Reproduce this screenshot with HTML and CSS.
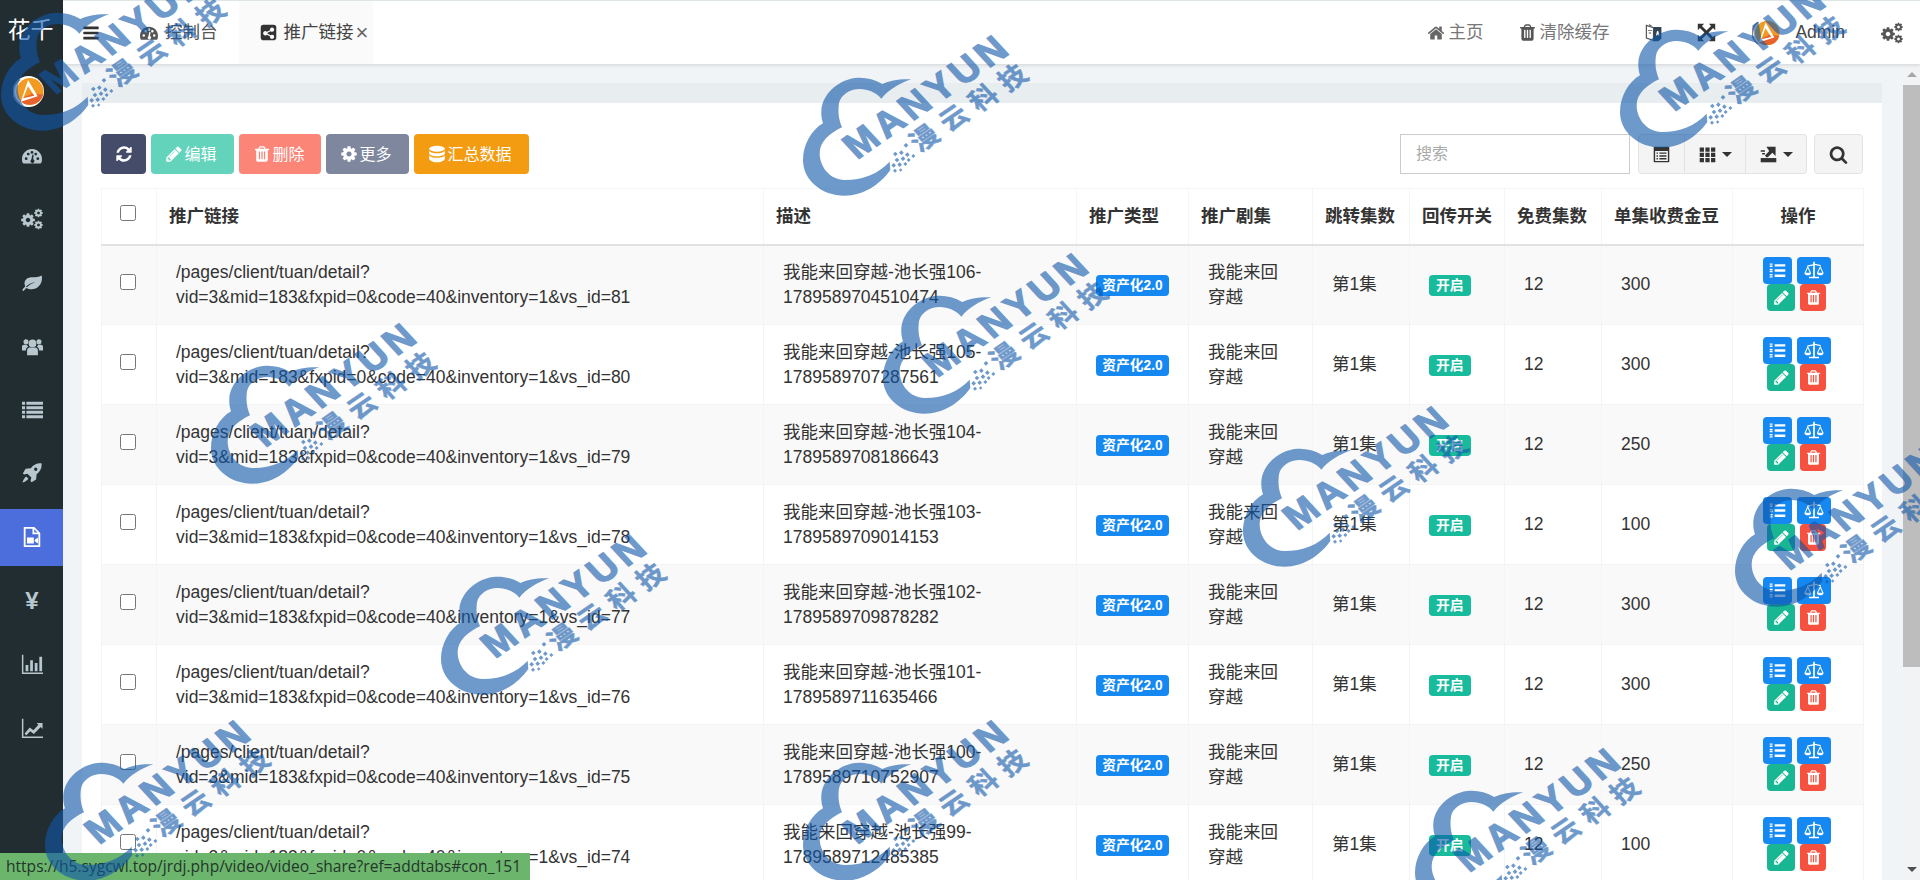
FILE: index.html
```html
<!DOCTYPE html>
<html lang="zh-CN">
<head>
<meta charset="utf-8">
<title>推广链接</title>
<link rel="stylesheet" href="styles.css">
</head>
<body>
<svg class="defs" aria-hidden="true">
  <symbol id="i-bars" viewBox="0 0 1792 1792"><path d="M1664 1344v128q0 26-19 45t-45 19h-1408q-26 0-45-19t-19-45v-128q0-26 19-45t45-19h1408q26 0 45 19t19 45zm0-512v128q0 26-19 45t-45 19h-1408q-26 0-45-19t-19-45v-128q0-26 19-45t45-19h1408q26 0 45 19t19 45zm0-512v128q0 26-19 45t-45 19h-1408q-26 0-45-19t-19-45v-128q0-26 19-45t45-19h1408q26 0 45 19t19 45z"/></symbol>
  <symbol id="i-search" viewBox="0 0 1792 1792"><path d="M1216 832q0-185-131.500-316.500t-316.500-131.500-316.500 131.500-131.500 316.500 131.500 316.500 316.500 131.500 316.500-131.500 131.500-316.500zm512 832q0 52-38 90t-90 38q-54 0-90-38l-343-342q-179 124-399 124-143 0-273.500-55.500t-225-150-150-225-55.500-273.500 55.500-273.500 150-225 225-150 273.500-55.500 273.500 55.500 225 150 150 225 55.500 273.500q0 220-124 399l343 343q37 37 37 90z"/></symbol>
  <symbol id="i-trash" viewBox="0 0 1792 1792"><path d="M704 1376v-704q0-14-9-23t-23-9h-64q-14 0-23 9t-9 23v704q0 14 9 23t23 9h64q14 0 23-9t9-23zm256 0v-704q0-14-9-23t-23-9h-64q-14 0-23 9t-9 23v704q0 14 9 23t23 9h64q14 0 23-9t9-23zm256 0v-704q0-14-9-23t-23-9h-64q-14 0-23 9t-9 23v704q0 14 9 23t23 9h64q14 0 23-9t9-23zm-544-992h448l-48-117q-7-9-17-11h-317q-10 2-17 11zm928 32v64q0 14-9 23t-23 9h-96v948q0 83-47 143.500t-113 60.500h-832q-66 0-113-58.500t-47-141.500v-952h-96q-14 0-23-9t-9-23v-64q0-14 9-23t23-9h309l70-167q15-37 54-63t79-26h320q40 0 79 26t54 63l70 167h309q14 0 23 9t9 23z"/></symbol>
  <symbol id="i-pencil" viewBox="0 0 1792 1792"><path d="M491 1536l91-91-235-235-91 91v107h128v128h107zm523-928q0-22-22-22-10 0-17 7l-542 542q-7 7-7 17 0 22 22 22 10 0 17-7l542-542q7-7 7-17zm-54-192l416 416-832 832h-416v-416zm683 96q0 53-37 90l-166 166-416-416 166-165q36-38 90-38 53 0 91 38l235 234q37 39 37 91z"/></symbol>
  <symbol id="i-home" viewBox="0 0 1792 1792"><path d="M1472 992v480q0 26-19 45t-45 19h-384v-384h-256v384h-384q-26 0-45-19t-19-45v-480q0-1 .5-3t.5-3l575-474 575 474q1 2 1 6zm223-69l-62 74q-8 9-21 11h-3q-13 0-21-7l-692-577-692 577q-12 8-24 7-13-2-21-11l-62-74q-8-10-7-23.500t11-21.500l719-599q32-26 76-26t76 26l244 204v-195q0-14 9-23t23-9h192q14 0 23 9t9 23v408l219 182q10 8 11 21.500t-7 23.500z"/></symbol>
  <symbol id="i-refresh" viewBox="0 0 1792 1792"><path d="M1639 1056q0 5-1 7-64 268-268 434.500t-478 166.500q-146 0-282.500-55t-243.500-157l-129 129q-19 19-45 19t-45-19-19-45v-448q0-26 19-45t45-19h448q26 0 45 19t19 45-19 45l-137 137q71 66 161 102t187 36q134 0 250-65t186-179q11-17 53-117 8-23 30-23h192q13 0 22.500 9.500t9.500 22.500zm25-800v448q0 26-19 45t-45 19h-448q-26 0-45-19t-19-45 19-45l138-138q-148-137-349-137-134 0-250 65t-186 179q-11 17-53 117-8 23-30 23h-199q-13 0-22.500-9.500t-9.500-22.500v-7q65-268 270-434.500t480-166.500q146 0 284 55.500t245 156.500l130-129q19-19 45-19t45 19 19 45z"/></symbol>
  <symbol id="i-cog" viewBox="0 0 1792 1792"><path d="M1152 896q0-106-75-181t-181-75-181 75-75 181 75 181 181 75 181-75 75-181zm512-109v222q0 12-8 23t-20 13l-185 28q-19 54-39 91 35 50 107 138 10 12 10 25t-9 23q-27 37-99 108t-94 71q-12 0-26-9l-138-108q-44 23-91 38-16 136-29 186-7 28-36 28h-222q-14 0-24.500-8.500t-11.500-21.500l-28-184q-49-16-90-37l-141 107q-10 9-25 9-14 0-25-11-126-114-165-168-7-10-7-23 0-12 8-23 15-21 51-66.500t54-70.500q-27-50-41-99l-183-27q-13-2-21-12.500t-8-23.500v-222q0-12 8-23t19-13l186-28q14-46 39-92-40-57-107-138-10-12-10-24 0-10 9-23 26-36 98.500-107.500t94.500-71.500q13 0 26 10l138 107q44-23 91-38 16-136 29-186 7-28 36-28h222q14 0 24.500 8.500t11.500 21.500l28 184q49 16 90 37l142-107q9-9 24-9 13 0 25 10 129 119 165 170 7 8 7 22 0 12-8 23-15 21-51 66.500t-54 70.500q26 50 41 98l183 28q13 2 21 12.500t8 23.500z"/></symbol>
  <symbol id="i-cogs" viewBox="0 0 24 24"><use href="#i-cog" x="0" y="5" width="16" height="16"/><use href="#i-cog" x="13.500" y="1" width="10" height="10"/><use href="#i-cog" x="13.500" y="13" width="10" height="10"/></symbol>
  <symbol id="i-dash" viewBox="0 0 24 24"><path fill-rule="evenodd" d="M1 20.500C.4 19.300 0 17.300 0 15.500 0 8.800 5.400 3.500 12 3.500S24 8.800 24 15.500c0 1.800-.4 3.800-1 5-.2.400-.6.500-1 .5H2c-.4 0-.8-.1-1-.5zM5 13.500a1.700 1.700 0 1 0 0 3.400 1.700 1.700 0 0 0 0-3.400zM7.500 8a1.700 1.700 0 1 0 0 3.400 1.700 1.700 0 0 0 0-3.400zM12 6a1.700 1.700 0 1 0 0 3.400 1.700 1.700 0 0 0 0-3.400zM16.500 8a1.700 1.700 0 1 0 0 3.400 1.700 1.700 0 0 0 0-3.400zM19 13.500a1.700 1.700 0 1 0 0 3.400 1.700 1.700 0 0 0 0-3.400zM11.200 16.200a2.300 2.300 0 1 0 2.200-.2l.6-5.500h-1.600z"/></symbol>
  <symbol id="i-leaf" viewBox="0 0 24 24"><path fill-rule="evenodd" d="M23.500 3c.5 1 .5 2 .5 3 0 8-5.500 13.500-12.500 13.500-2.500 0-4.700-.5-6.300-1.500-1 .9-2 2-3 3.200-.5.500-1.700.3-1.700-.7 0-.9 2.400-3.300 3.300-4.200C3.600 15 3 13.800 3 12.300 3 7.500 7.500 5 12 5c4 0 8.500 0 11.500-2zM5.800 17.200c2.700-3 5.900-5 10.200-6.200-4.800.4-8.300 2.300-11.300 5.400.3.300.7.600 1.100.8z"/></symbol>
  <symbol id="i-users" viewBox="0 0 24 24"><circle cx="12" cy="8.500" r="4.400"/><circle cx="4.600" cy="6.500" r="2.900"/><circle cx="19.400" cy="6.500" r="2.900"/><path d="M5.800 22v-5.500c0-2.300 1.700-3.500 3-3.500h6.400c1.300 0 3 1.200 3 3.500V22zM0 16.500v-4C0 11 1 10 2.300 10h3.300c.3 1 .9 1.800 1.600 2.400-1.700.6-2.800 2.200-2.800 4.100zM24 16.500v-4c0-1.500-1-2.500-2.300-2.500h-3.300c-.3 1-.9 1.800-1.600 2.400 1.700.6 2.800 2.200 2.800 4.100z"/></symbol>
  <symbol id="i-list" viewBox="0 0 24 24"><path d="M0 3h3.500v3.500H0zM5 3h19v3.500H5zM0 8.200h3.500v3.500H0zM5 8.200h19v3.500H5zM0 13.400h3.500v3.500H0zM5 13.400h19v3.500H5zM0 18.600h3.500v3.500H0zM5 18.600h19v3.500H5z"/></symbol>
  <symbol id="i-rocket" viewBox="0 0 24 24"><path fill-rule="evenodd" d="M23.500 .5c.5 5-1.500 9.500-6 13l-.6 6.200L11.500 23l-1.300-1.500 1-4-4.700-4.700-4 1L1 12.500 4.300 7l6.200-.6c3.500-4.500 8-6.500 13-5.900zM16.500 5.500a2 2 0 1 0 0 4 2 2 0 0 0 0-4z"/><path d="M5.200 16.300l2.500 2.500c-1.500 2.300-4 3.500-7.200 4.700 1.200-3.200 2.400-5.700 4.700-7.200z"/></symbol>
  <symbol id="i-file" viewBox="0 0 24 24"><path fill-rule="evenodd" d="M3 1h11.500L21 7.500V23H3zM5 3v18h14V9h-6.500V3zM14.500 3.500V7h3.500zM6.500 12.500h7.500v6.500H6.500zM15 15l3.500-2.500v6.500L15 16.500z"/></symbol>
  <symbol id="i-barchart" viewBox="0 0 24 24"><path d="M1 2h1.600v19.400H24V23H1zM5 13h3v7H5zM10 8h3v12h-3zM15 11h3v9h-3zM20 4h3v16h-3z"/></symbol>
  <symbol id="i-linechart" viewBox="0 0 24 24"><path d="M1 2h1.600v19.400H24V23H1z"/><path d="M4 18l5.500-6.500 4 3L19 8.500 17 6.500h6.500v6.500l-2-2-7.500 7.500-4-3-4.300 4.800z"/></symbol>
  <symbol id="i-arrows" viewBox="0 0 24 24"><path d="M1 1h8L6.300 3.700 12 9.400l5.700-5.700L15 1h8v8l-2.700-2.700L14.600 12l5.700 5.700L23 15v8h-8l2.700-2.700L12 14.600l-5.700 5.700L9 23H1v-8l2.700 2.700L9.400 12 3.700 6.300 1 9z"/></symbol>
  <symbol id="i-lang" viewBox="0 0 24 24"><path fill="#fff" stroke="#555" stroke-width="1.500" d="M3 3l9 3v16l-9-3z"/><path fill="#345" d="M12 5h10v15l-4 3h-6z"/><path fill="#fff" d="M15 16l1.500-6h1.500l1.500 6h-1.200l-.3-1.300h-1.600l-.3 1.300z"/><path fill="#667" d="M6 1l5 3H7z"/><path fill="#555" d="M5 9h5v1.200H5zM6 12h3v1.200H6z"/></symbol>
  <symbol id="i-share" viewBox="0 0 24 24"><path fill-rule="evenodd" d="M5 1h14a4 4 0 0 1 4 4v14a4 4 0 0 1-4 4H5a4 4 0 0 1-4-4V5a4 4 0 0 1 4-4zM17 5a3 3 0 0 0-3 3l.1.700-4.500 2.300a3 3 0 1 0 0 4l4.500 2.300-.1.700a3 3 0 1 0 1-2.200l-4.500-2.300a3 3 0 0 0 0-1l4.500-2.300A3 3 0 1 0 17 5z"/></symbol>
  <symbol id="i-listalt" viewBox="0 0 24 24"><path fill-rule="evenodd" d="M2 1h20a1 1 0 0 1 1 1v20a1 1 0 0 1-1 1H2a1 1 0 0 1-1-1V2a1 1 0 0 1 1-1zM3 7v14h18V7zM5 9h2v2H5zM9 9h10v2H9zM5 13h2v2H5zM9 13h10v2H9zM5 17h2v2H5zM9 17h10v2H9z"/></symbol>
  <symbol id="i-th" viewBox="0 0 24 24"><path d="M1 2h6v6H1zM9 2h6v6H9zM17 2h6v6h-6zM1 9.500h6v6H1zM9 9.500h6v6H9zM17 9.500h6v6h-6zM1 17h6v6H1zM9 17h6v6H9zM17 17h6v6h-6z"/></symbol>
  <symbol id="i-export" viewBox="0 0 24 24"><path d="M1 17h22v6H1z"/><path d="M9 1h13v13l-4.500-4.500L11 16H9l-2-2.500 6-6.500z"/><path d="M1 6h6v2H1zM3 10h4v2H3z"/></symbol>
  <symbol id="i-db" viewBox="0 0 24 24"><ellipse cx="12" cy="5" rx="10.500" ry="4"/><path d="M1.500 7.500C3 10 8 11 12 11s9-1 10.500-3.500v4C21 14 16 15 12 15s-9-1-10.500-3.500zM1.500 13.500C3 16 8 17 12 17s9-1 10.500-3.500v5C21 21.500 16 23 12 23s-9-1.500-10.500-4.500z"/></symbol>
  <symbol id="i-listol" viewBox="0 0 24 24"><path d="M8 3h15v3.500H8zM8 10.200h15v3.500H8zM8 17.500h15V21H8zM1 2h4v2H1zM1 5h4v2H1zM1 9.500h4v2H1zM1 12.500h4v2H1zM1 17h4v2H1zM1 20h4v2H1z"/></symbol>
  <symbol id="i-scale" viewBox="0 0 24 24"><path d="M11 2h2v2.500l7 1.500v1.500l-7-1.500V20h5v2H6v-2h5V6.500L4 8V6.500l7-1.500z"/><path fill-rule="evenodd" d="M4.500 7l4 8.500c0 1.800-2 2.800-4 2.800s-4-1-4-2.800zM4.500 10l-2.500 5.300h5zM19.500 7l4 8.500c0 1.800-2 2.800-4 2.800s-4-1-4-2.800zM19.500 10L17 15.300h5z"/></symbol>
  <symbol id="i-avatar" viewBox="0 0 32 32"><circle cx="16" cy="16" r="16" fill="#fff"/><path fill="#7c8794" d="M6 3a16 16 0 0 0 0 26l2-1a14 14 0 0 1 0-24z"/><circle cx="17.500" cy="16" r="14" fill="#f39a22"/><path fill="#e7622c" d="M31 19a14 14 0 0 1-24 6l11-7z"/><path fill="#fff" fill-rule="evenodd" d="M15.500 4l10 17L8 26.500zM15.500 10.500l-5 12.500 11.500-2.500z"/><path fill="#f39a22" d="M15.500 14l-2.500 6.500 5.500-1z"/></symbol>
</svg>

<div class="app">
  <aside class="sidebar">
    <div class="brand">花千</div>
    <div class="user-panel"><svg class="user-img"><use href="#i-avatar"/></svg></div>
    <ul class="menu">
      <li class="menu-item"><svg class="menu-icon"><use href="#i-dash"/></svg></li>
      <li class="menu-item"><svg class="menu-icon ic-cogs"><use href="#i-cogs"/></svg></li>
      <li class="menu-item"><svg class="menu-icon"><use href="#i-leaf"/></svg></li>
      <li class="menu-item"><svg class="menu-icon ic-wide"><use href="#i-users"/></svg></li>
      <li class="menu-item"><svg class="menu-icon ic-wide"><use href="#i-list"/></svg></li>
      <li class="menu-item"><svg class="menu-icon"><use href="#i-rocket"/></svg></li>
      <li class="menu-item active"><svg class="menu-icon ic-file"><use href="#i-file"/></svg></li>
      <li class="menu-item yen">¥</li>
      <li class="menu-item"><svg class="menu-icon ic-chart"><use href="#i-barchart"/></svg></li>
      <li class="menu-item"><svg class="menu-icon ic-chart"><use href="#i-linechart"/></svg></li>
    </ul>
  </aside>

  <div class="main">
    <header class="topbar">
      <svg class="toggle"><use href="#i-bars"/></svg>
      <div class="tab tab-home"><svg class="tab-dash"><use href="#i-dash"/></svg>控制台</div>
      <div class="tab tab-active"><svg class="tab-share"><use href="#i-share"/></svg>推广链接<span class="tab-close">×</span></div>
      <nav class="topnav">
        <a class="nav-link"><svg class="nav-home"><use href="#i-home"/></svg>主页</a>
        <a class="nav-link"><svg class="nav-trash"><use href="#i-trash"/></svg>清除缓存</a>
        <a class="nav-link"><svg class="nav-lang"><use href="#i-lang"/></svg></a>
        <a class="nav-link"><svg class="nav-arrows"><use href="#i-arrows"/></svg></a>
        <a class="nav-user"><svg class="nav-avatar"><use href="#i-avatar"/></svg>Admin</a>
        <a class="nav-link"><svg class="nav-cogs"><use href="#i-cogs"/></svg></a>
      </nav>
    </header>

    <div class="workspace">
      <div class="content">
        <section class="panel">
          <div class="panel-heading"></div>
          <div class="panel-body">
            <div class="toolbar">
              <div class="actions">
                <button class="btn btn-navy"><svg class="btn-icon"><use href="#i-refresh"/></svg></button>
                <button class="btn btn-green"><svg class="btn-icon"><use href="#i-pencil"/></svg>编辑</button>
                <button class="btn btn-red"><svg class="btn-icon"><use href="#i-trash"/></svg>删除</button>
                <button class="btn btn-grey"><svg class="btn-icon"><use href="#i-cog"/></svg>更多</button>
                <button class="btn btn-orange"><svg class="btn-icon"><use href="#i-db"/></svg>汇总数据</button>
              </div>
              <div class="tools">
                <input class="search" placeholder="搜索">
                <div class="btn-group">
                  <button class="tool tool-a"><svg class="tool-icon"><use href="#i-listalt"/></svg></button>
                  <button class="tool tool-b"><svg class="tool-icon"><use href="#i-th"/></svg><i class="caret"></i></button>
                  <button class="tool tool-b"><svg class="tool-icon"><use href="#i-export"/></svg><i class="caret"></i></button>
                </div>
                <button class="tool tool-search"><svg class="tool-icon ic-search"><use href="#i-search"/></svg></button>
              </div>
            </div>

            <table class="grid">
              <colgroup>
                <col class="c-check"><col class="c-link"><col class="c-desc"><col class="c-type"><col class="c-drama"><col class="c-jump"><col class="c-toggle"><col class="c-free"><col class="c-price"><col class="c-op">
              </colgroup>
              <thead>
                <tr><th class="center"><input type="checkbox" class="check"></th><th>推广链接</th><th>描述</th><th>推广类型</th><th>推广剧集</th><th>跳转集数</th><th>回传开关</th><th>免费集数</th><th>单集收费金豆</th><th class="center">操作</th></tr>
              </thead>
              <tbody>
                <tr><td class="center"><input type="checkbox" class="check"></td><td>/pages/client/tuan/detail?<br>vid=3&amp;mid=183&amp;fxpid=0&amp;code=40&amp;inventory=1&amp;vs_id=81</td><td>我能来回穿越-池长强106-<br>1789589704510474</td><td class="center"><span class="badge b-blue">资产化2.0</span></td><td>我能来回穿越</td><td>第1集</td><td><span class="badge b-green">开启</span></td><td>12</td><td>300</td><td><div class="ops"><button class="op op-list"><svg><use href="#i-listol"/></svg></button><button class="op op-scale"><svg><use href="#i-scale"/></svg></button></div><div class="ops"><button class="op op-edit"><svg><use href="#i-pencil"/></svg></button><button class="op op-del"><svg><use href="#i-trash"/></svg></button></div></td></tr>
                <tr><td class="center"><input type="checkbox" class="check"></td><td>/pages/client/tuan/detail?<br>vid=3&amp;mid=183&amp;fxpid=0&amp;code=40&amp;inventory=1&amp;vs_id=80</td><td>我能来回穿越-池长强105-<br>1789589707287561</td><td class="center"><span class="badge b-blue">资产化2.0</span></td><td>我能来回穿越</td><td>第1集</td><td><span class="badge b-green">开启</span></td><td>12</td><td>300</td><td><div class="ops"><button class="op op-list"><svg><use href="#i-listol"/></svg></button><button class="op op-scale"><svg><use href="#i-scale"/></svg></button></div><div class="ops"><button class="op op-edit"><svg><use href="#i-pencil"/></svg></button><button class="op op-del"><svg><use href="#i-trash"/></svg></button></div></td></tr>
                <tr><td class="center"><input type="checkbox" class="check"></td><td>/pages/client/tuan/detail?<br>vid=3&amp;mid=183&amp;fxpid=0&amp;code=40&amp;inventory=1&amp;vs_id=79</td><td>我能来回穿越-池长强104-<br>1789589708186643</td><td class="center"><span class="badge b-blue">资产化2.0</span></td><td>我能来回穿越</td><td>第1集</td><td><span class="badge b-green">开启</span></td><td>12</td><td>250</td><td><div class="ops"><button class="op op-list"><svg><use href="#i-listol"/></svg></button><button class="op op-scale"><svg><use href="#i-scale"/></svg></button></div><div class="ops"><button class="op op-edit"><svg><use href="#i-pencil"/></svg></button><button class="op op-del"><svg><use href="#i-trash"/></svg></button></div></td></tr>
                <tr><td class="center"><input type="checkbox" class="check"></td><td>/pages/client/tuan/detail?<br>vid=3&amp;mid=183&amp;fxpid=0&amp;code=40&amp;inventory=1&amp;vs_id=78</td><td>我能来回穿越-池长强103-<br>1789589709014153</td><td class="center"><span class="badge b-blue">资产化2.0</span></td><td>我能来回穿越</td><td>第1集</td><td><span class="badge b-green">开启</span></td><td>12</td><td>100</td><td><div class="ops"><button class="op op-list"><svg><use href="#i-listol"/></svg></button><button class="op op-scale"><svg><use href="#i-scale"/></svg></button></div><div class="ops"><button class="op op-edit"><svg><use href="#i-pencil"/></svg></button><button class="op op-del"><svg><use href="#i-trash"/></svg></button></div></td></tr>
                <tr><td class="center"><input type="checkbox" class="check"></td><td>/pages/client/tuan/detail?<br>vid=3&amp;mid=183&amp;fxpid=0&amp;code=40&amp;inventory=1&amp;vs_id=77</td><td>我能来回穿越-池长强102-<br>1789589709878282</td><td class="center"><span class="badge b-blue">资产化2.0</span></td><td>我能来回穿越</td><td>第1集</td><td><span class="badge b-green">开启</span></td><td>12</td><td>300</td><td><div class="ops"><button class="op op-list"><svg><use href="#i-listol"/></svg></button><button class="op op-scale"><svg><use href="#i-scale"/></svg></button></div><div class="ops"><button class="op op-edit"><svg><use href="#i-pencil"/></svg></button><button class="op op-del"><svg><use href="#i-trash"/></svg></button></div></td></tr>
                <tr><td class="center"><input type="checkbox" class="check"></td><td>/pages/client/tuan/detail?<br>vid=3&amp;mid=183&amp;fxpid=0&amp;code=40&amp;inventory=1&amp;vs_id=76</td><td>我能来回穿越-池长强101-<br>1789589711635466</td><td class="center"><span class="badge b-blue">资产化2.0</span></td><td>我能来回穿越</td><td>第1集</td><td><span class="badge b-green">开启</span></td><td>12</td><td>300</td><td><div class="ops"><button class="op op-list"><svg><use href="#i-listol"/></svg></button><button class="op op-scale"><svg><use href="#i-scale"/></svg></button></div><div class="ops"><button class="op op-edit"><svg><use href="#i-pencil"/></svg></button><button class="op op-del"><svg><use href="#i-trash"/></svg></button></div></td></tr>
                <tr><td class="center"><input type="checkbox" class="check"></td><td>/pages/client/tuan/detail?<br>vid=3&amp;mid=183&amp;fxpid=0&amp;code=40&amp;inventory=1&amp;vs_id=75</td><td>我能来回穿越-池长强100-<br>1789589710752907</td><td class="center"><span class="badge b-blue">资产化2.0</span></td><td>我能来回穿越</td><td>第1集</td><td><span class="badge b-green">开启</span></td><td>12</td><td>250</td><td><div class="ops"><button class="op op-list"><svg><use href="#i-listol"/></svg></button><button class="op op-scale"><svg><use href="#i-scale"/></svg></button></div><div class="ops"><button class="op op-edit"><svg><use href="#i-pencil"/></svg></button><button class="op op-del"><svg><use href="#i-trash"/></svg></button></div></td></tr>
                <tr><td class="center"><input type="checkbox" class="check"></td><td>/pages/client/tuan/detail?<br>vid=3&amp;mid=183&amp;fxpid=0&amp;code=40&amp;inventory=1&amp;vs_id=74</td><td>我能来回穿越-池长强99-<br>1789589712485385</td><td class="center"><span class="badge b-blue">资产化2.0</span></td><td>我能来回穿越</td><td>第1集</td><td><span class="badge b-green">开启</span></td><td>12</td><td>100</td><td><div class="ops"><button class="op op-list"><svg><use href="#i-listol"/></svg></button><button class="op op-scale"><svg><use href="#i-scale"/></svg></button></div><div class="ops"><button class="op op-edit"><svg><use href="#i-pencil"/></svg></button><button class="op op-del"><svg><use href="#i-trash"/></svg></button></div></td></tr>
              </tbody>
            </table>
          </div>
        </section>
      </div>
      <div class="scrollbar">
        <i class="sb-up"></i>
        <div class="sb-thumb"></div>
        <i class="sb-down"></i>
      </div>
    </div>
  </div>
</div>

<div class="status-bubble">https://h5.sygcwl.top/jrdj.php/video/video_share?ref=addtabs#con_151</div>

<svg class="defs" aria-hidden="true">
  <symbol id="wm-cloud" viewBox="70 30 681 497" overflow="visible">
    <path d="M395 178C360 176 330 182 308 192C285 178 260 172 235 173C185 175 130 215 125 270C124 285 126 298 130 310C95 330 70 375 70 420C70 480 125 527 195 527C250 527 300 495 332 450L330 425C295 462 250 480 195 480C150 480 120 440 120 400C120 365 150 340 187 322C178 300 174 280 178 250C183 225 210 207 240 207C265 207 290 218 305 236C325 210 360 190 395 178Z"/>
    <path d="M340 402l7-7 7 7-7 7zM358 398l7-7 7 7-7 7zM376 404l7-7 7 7-7 7zM345 420l7-7 7 7-7 7zM363 416l7-7 7 7-7 7zM381 420l6-6 6 6-6 6zM335 436l7-7 7 7-7 7zM353 434l7-7 7 7-7 7zM371 432l6-6 6 6-6 6zM340 452l6-6 6 6-6 6zM358 450l5-5 5 5-5 5zM395 408l6-6 6 6-6 6zM372 376l7-7 7 7-7 7z"/>
  </symbol>
</svg>

<svg class="wm wm-a" viewBox="70 30 681 497"><use href="#wm-cloud" x="70" y="30" width="681" height="497"/><text class="wm-en" transform="translate(232 420) rotate(-34.800) skewX(8)">MANYUN</text><text class="wm-cn" transform="translate(420 398) rotate(-34.200) skewX(8)">漫云科技</text></svg>
<svg class="wm wm-b" viewBox="70 30 681 497"><use href="#wm-cloud" x="70" y="30" width="681" height="497"/><text class="wm-en" transform="translate(232 420) rotate(-34.800) skewX(8)">MANYUN</text><text class="wm-cn" transform="translate(420 398) rotate(-34.200) skewX(8)">漫云科技</text></svg>
<svg class="wm wm-c" viewBox="70 30 681 497"><use href="#wm-cloud" x="70" y="30" width="681" height="497"/><text class="wm-en" transform="translate(232 420) rotate(-34.800) skewX(8)">MANYUN</text><text class="wm-cn" transform="translate(420 398) rotate(-34.200) skewX(8)">漫云科技</text></svg>
<svg class="wm wm-d" viewBox="70 30 681 497"><use href="#wm-cloud" x="70" y="30" width="681" height="497"/><text class="wm-en" transform="translate(232 420) rotate(-34.800) skewX(8)">MANYUN</text><text class="wm-cn" transform="translate(420 398) rotate(-34.200) skewX(8)">漫云科技</text></svg>
<svg class="wm wm-e" viewBox="70 30 681 497"><use href="#wm-cloud" x="70" y="30" width="681" height="497"/><text class="wm-en" transform="translate(232 420) rotate(-34.800) skewX(8)">MANYUN</text><text class="wm-cn" transform="translate(420 398) rotate(-34.200) skewX(8)">漫云科技</text></svg>
<svg class="wm wm-f" viewBox="70 30 681 497"><use href="#wm-cloud" x="70" y="30" width="681" height="497"/><text class="wm-en" transform="translate(232 420) rotate(-34.800) skewX(8)">MANYUN</text><text class="wm-cn" transform="translate(420 398) rotate(-34.200) skewX(8)">漫云科技</text></svg>
<svg class="wm wm-g" viewBox="70 30 681 497"><use href="#wm-cloud" x="70" y="30" width="681" height="497"/><text class="wm-en" transform="translate(232 420) rotate(-34.800) skewX(8)">MANYUN</text><text class="wm-cn" transform="translate(420 398) rotate(-34.200) skewX(8)">漫云科技</text></svg>
<svg class="wm wm-h" viewBox="70 30 681 497"><use href="#wm-cloud" x="70" y="30" width="681" height="497"/><text class="wm-en" transform="translate(232 420) rotate(-34.800) skewX(8)">MANYUN</text><text class="wm-cn" transform="translate(420 398) rotate(-34.200) skewX(8)">漫云科技</text></svg>
<svg class="wm wm-i" viewBox="70 30 681 497"><use href="#wm-cloud" x="70" y="30" width="681" height="497"/><text class="wm-en" transform="translate(232 420) rotate(-34.800) skewX(8)">MANYUN</text><text class="wm-cn" transform="translate(420 398) rotate(-34.200) skewX(8)">漫云科技</text></svg>
<svg class="wm wm-j" viewBox="70 30 681 497"><use href="#wm-cloud" x="70" y="30" width="681" height="497"/><text class="wm-en" transform="translate(232 420) rotate(-34.800) skewX(8)">MANYUN</text><text class="wm-cn" transform="translate(420 398) rotate(-34.200) skewX(8)">漫云科技</text></svg>
<svg class="wm wm-k" viewBox="70 30 681 497"><use href="#wm-cloud" x="70" y="30" width="681" height="497"/><text class="wm-en" transform="translate(232 420) rotate(-34.800) skewX(8)">MANYUN</text><text class="wm-cn" transform="translate(420 398) rotate(-34.200) skewX(8)">漫云科技</text></svg>
</body>
</html>
```

FILE: styles.css
```css
* { box-sizing: border-box; }
html, body { margin: 0; height: 880px; overflow: hidden; }
body {
  position: relative;
  font-family: "Liberation Sans", "Noto Sans CJK SC", sans-serif;
  font-size: 17.5px;
  line-height: 25px;
  color: #333;
  background: #f1f4f6;
}
svg { fill: currentColor; display: block; }
.defs { position: absolute; width: 0; height: 0; overflow: hidden; }
ul { list-style: none; margin: 0; padding: 0; }
button { font: inherit; border: 0; padding: 0; cursor: pointer; }

.app { display: flex; height: 880px; }

/* sidebar */
.sidebar { width: 63px; flex: none; background: #222d32; color: #b8c7ce; }
.brand { height: 64px; display: flex; align-items: center; justify-content: center; color: #fff; font-size: 23px; padding-bottom: 4px; padding-right: 2px; }
.user-panel { height: 63px; padding: 12px 0 0 13px; }
.user-img { width: 31px; height: 31px; }
.menu-item { height: 57px; margin-bottom: 6.600px; display: flex; align-items: center; justify-content: center; }
.menu-icon { width: 20px; height: 20px; margin-left: 1px; }
.menu-icon.ic-cogs { width: 24px; height: 24px; }
.menu-icon.ic-wide { width: 21px; height: 21px; }
.menu-icon.ic-file { width: 22px; height: 22px; }
.menu-icon.ic-chart { width: 22px; height: 22px; }
.menu-item.active { background: #4c6ddc; color: #fff; }
.menu-item.yen { font-size: 24px; font-weight: 700; padding-left: 1px; }

/* top bar */
.main { flex: 1; min-width: 0; display: flex; flex-direction: column; }
.topbar { position: relative; z-index: 2; height: 64px; flex: none; display: flex; align-items: center; background: #fff; border-top: 1px solid #dde6e4; box-shadow: 0 1px 4px rgba(0, 0, 0, .14); color: #555; }
.toggle { width: 18px; height: 18px; margin-left: 19px; color: #333; }
.tab { display: flex; align-items: center; }
.tab-home { margin-left: 40px; gap: 7px; }
.tab-dash { width: 18px; height: 18px; }
.tab-active { align-self: stretch; margin-left: 21px; width: 134px; padding-left: 21px; background: #fafafa; color: #444; }
.tab-share { width: 17px; height: 17px; margin-right: 7px; color: #333; }
.tab-close { margin-left: 2px; color: #666; font-size: 22px; }
.topnav { margin-left: auto; display: flex; align-items: center; gap: 37px; padding-right: 18px; color: #777; }
.nav-link { display: flex; align-items: center; gap: 4px; }
.nav-home { width: 18px; height: 18px; margin-right: -1px; color: #666; }
.nav-trash { width: 19px; height: 19px; margin: 0 -2px; color: #555; }
.nav-lang { width: 19px; height: 19px; margin: 0 -2px; }
.nav-arrows { width: 19px; height: 19px; margin: 0 -1px; color: #333; }
.nav-user { display: flex; align-items: center; gap: 15px; color: #444; }
.nav-avatar { width: 28px; height: 28px; }
.nav-cogs { width: 24px; height: 24px; margin: 0 -2px; color: #555; }

/* content */
.workspace { flex: 1; min-height: 0; display: flex; }
.content { flex: 1; min-width: 0; padding: 19px 21px 0 19px; overflow: hidden; }
.panel { background: #fff; }
.panel-heading { height: 20px; background: #e8edf0; }
.panel-body { padding: 31px 19px 0; }
.toolbar { display: flex; justify-content: space-between; height: 40px; margin-bottom: 14px; }
.actions { display: flex; gap: 5px; }
.btn { height: 40px; padding: 0 17.500px 0 13.500px; border-radius: 4px; display: flex; align-items: center; gap: 2px; color: #fff; font-size: 16px; }
.btn-icon { width: 18px; height: 18px; }
.btn-navy { background: #444c69; padding: 0 13.500px; }
.btn-green { background: #63d3bb; }
.btn-red { background: #fb8678; padding-right: 16.500px; }
.btn-grey { background: #7f879e; }
.btn-orange { background: #f39c12; }
.tools { display: flex; }
.search { width: 230px; height: 40px; border: 1px solid #ccc; padding: 0 15px; font: inherit; font-size: 16px; outline: 0; margin-right: 8px; }
.search::placeholder { color: #aaa; }
.btn-group { display: flex; margin-right: 7px; border-radius: 4px; }
.tool { height: 40px; background: #f4f4f4; border: 1px solid #e3e3e3; color: #333; display: flex; align-items: center; justify-content: center; gap: 6px; }
.tool-a { width: 47px; border-radius: 4px 0 0 4px; }
.tool-b { width: 61px; border-left: 0; }
.tool-b:last-child { border-radius: 0 4px 4px 0; }
.tool-search { width: 49px; border-radius: 4px; }
.tool-icon { width: 17px; height: 17px; }
.tool-icon.ic-search { width: 19px; height: 19px; }
.caret { width: 0; height: 0; border: 5px solid transparent; border-top-color: #333; border-bottom: 0; }

/* table */
.grid { width: 1762px; table-layout: fixed; border-collapse: collapse; }
.c-check { width: 55px; }
.c-link { width: 607px; }
.c-desc { width: 313px; }
.c-type { width: 112px; }
.c-drama { width: 124px; }
.c-jump { width: 97px; }
.c-toggle { width: 95px; }
.c-free { width: 97px; }
.c-price { width: 131px; }
.c-op { width: 131px; }
.grid th { height: 56px; padding: 0 12px; text-align: left; font-weight: 700; border: 1px solid #f6f6f6; border-bottom: 2px solid #e2e2e2; white-space: nowrap; }
.grid td { height: 80px; padding: 0 19px; border: 1px solid #f4f4f4; vertical-align: middle; }
.grid tbody tr:nth-child(odd) td { background: #f9f9f9; }
.grid th.center, .grid td.center { text-align: center; padding-left: 0; padding-right: 0; }
.check { width: 16px; height: 16px; margin: 0 2px 7.500px 0; vertical-align: middle; }
.badge { display: inline-block; height: 21px; line-height: 21px; padding: 0 6.500px; border-radius: 4px; color: #fff; font-size: 13.750px; font-weight: 700; }
.b-blue { background: #1688f1; }
.b-green { background: #18bc9c; padding: 0 7px; }
.grid td:last-child { padding: 0 3px 2px 0; }
.ops { display: flex; justify-content: center; gap: 5px; }
.op { height: 27px; display: flex; align-items: center; justify-content: center; border-radius: 4px; color: #fff; }
.op svg { width: 17px; height: 17px; }
.op-list { width: 29px; background: #1688f1; }
.op-scale { width: 34px; background: #1688f1; }
.op-scale svg { width: 20px; height: 20px; }
.op-edit { width: 28px; background: #18b693; }
.op-del { width: 26px; background: #f6513f; }

/* fake scrollbar of the framed page */
.scrollbar { width: 17px; flex: none; background: #f1f3f5; display: flex; flex-direction: column; align-items: stretch; }
.sb-up, .sb-down { display: block; width: 0; height: 0; border: 5px solid transparent; margin-left: 4px; }
.sb-up { border-top: 0; border-bottom-color: #a8a8a8; margin-top: 8px; }
.sb-thumb { height: 582px; margin-top: 8px; background: #bdbdbd; }
.sb-down { border-bottom: 0; border-top-color: #505050; margin-top: auto; margin-bottom: 8px; }

/* status bubble */
.status-bubble { position: absolute; left: 0; bottom: 0; width: 530px; height: 27px; padding-left: 6px; line-height: 26px; background: #6cb56d; color: #24352a; font-family: "Open Sans", sans-serif; font-size: 15.550px; white-space: nowrap; z-index: 5; }

/* watermarks */
.wm { position: absolute; width: 227px; height: 165.670px; overflow: visible; fill: #0f57aa; stroke: none; opacity: .6; pointer-events: none; z-index: 10; }
.wm-en { font-family: "Liberation Sans", sans-serif; font-weight: 700; font-size: 112px; letter-spacing: 14px; stroke: #0f57aa; stroke-width: 4px; }
.wm-cn { font-family: "Noto Sans CJK SC", sans-serif; font-weight: 700; font-size: 80px; letter-spacing: 27px; stroke: #0f57aa; stroke-width: 1.500px; }
.wm-a { left: 803px; top: 30px; }
.wm-b { left: 1px; top: -35px; }
.wm-c { left: 1620px; top: -18px; }
.wm-d { left: 883px; top: 248px; }
.wm-e { left: 211px; top: 318px; }
.wm-f { left: 1243px; top: 401px; }
.wm-g { left: 1735px; top: 441px; }
.wm-h { left: 441px; top: 529px; }
.wm-i { left: 45px; top: 715px; }
.wm-j { left: 803px; top: 715px; }
.wm-k { left: 1415px; top: 743px; }
```
